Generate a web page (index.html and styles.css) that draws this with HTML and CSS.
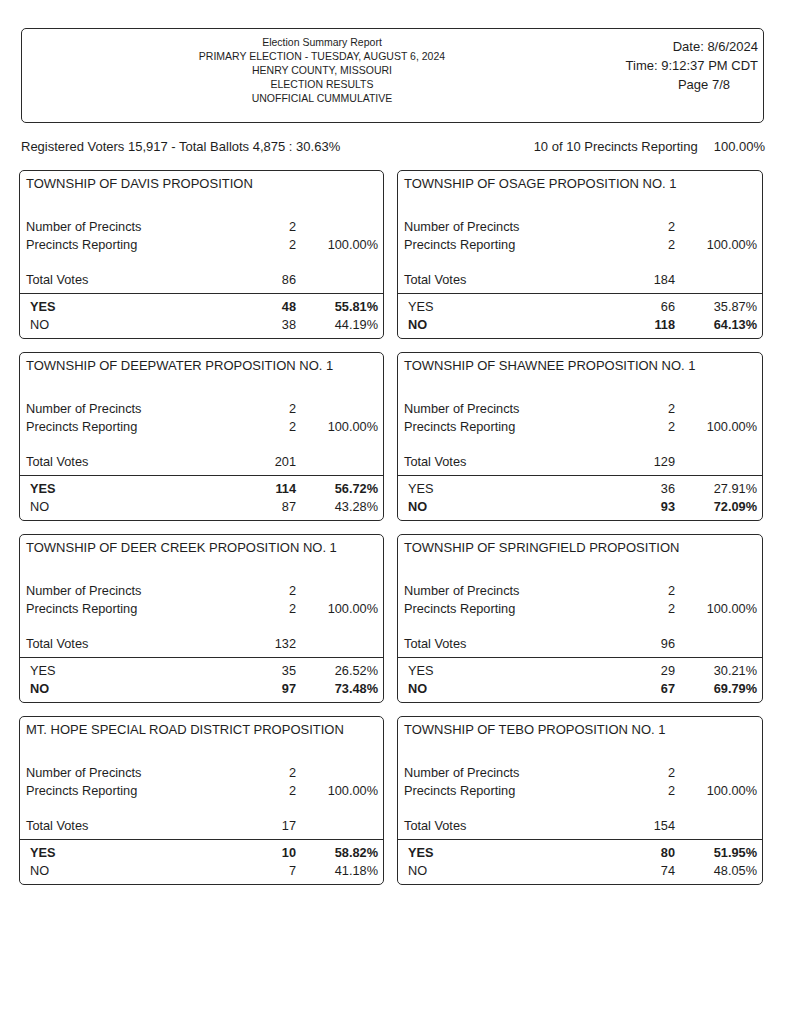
FILE: index.html
```html
<!DOCTYPE html>
<html>
<head>
<meta charset="utf-8">
<link rel="stylesheet" href="styles.css">
</head>
<body>
<div class="page">
  <header class="report-head">
    <div class="head-center">
      <div>Election Summary Report</div>
      <div>PRIMARY ELECTION - TUESDAY, AUGUST 6, 2024</div>
      <div>HENRY COUNTY, MISSOURI</div>
      <div>ELECTION RESULTS</div>
      <div>UNOFFICIAL CUMMULATIVE</div>
    </div>
    <div class="head-right">
      <div>Date: 8/6/2024</div>
      <div>Time: 9:12:37 PM CDT</div>
      <div class="page-no">Page 7/8</div>
    </div>
  </header>

  <div class="summary">
    <span>Registered Voters 15,917 - Total Ballots 4,875 : 30.63%</span>
    <span class="summary-right"><span>10 of 10 Precincts Reporting</span><span class="summary-pct">100.00%</span></span>
  </div>

  <main class="grid">
    <section class="box">
      <div class="title">TOWNSHIP OF DAVIS PROPOSITION</div>
      <div class="stats">
        <span>Number of Precincts</span><span class="num">2</span><span></span>
        <span>Precincts Reporting</span><span class="num">2</span><span class="num">100.00%</span>
      </div>
      <div class="stats total"><span>Total Votes</span><span class="num">86</span><span></span></div>
      <div class="stats choices">
        <span class="c b">YES</span><span class="num b">48</span><span class="num b">55.81%</span>
        <span class="c">NO</span><span class="num">38</span><span class="num">44.19%</span>
      </div>
    </section>

    <section class="box">
      <div class="title">TOWNSHIP OF OSAGE PROPOSITION NO. 1</div>
      <div class="stats">
        <span>Number of Precincts</span><span class="num">2</span><span></span>
        <span>Precincts Reporting</span><span class="num">2</span><span class="num">100.00%</span>
      </div>
      <div class="stats total"><span>Total Votes</span><span class="num">184</span><span></span></div>
      <div class="stats choices">
        <span class="c">YES</span><span class="num">66</span><span class="num">35.87%</span>
        <span class="c b">NO</span><span class="num b">118</span><span class="num b">64.13%</span>
      </div>
    </section>

    <section class="box">
      <div class="title">TOWNSHIP OF DEEPWATER PROPOSITION NO. 1</div>
      <div class="stats">
        <span>Number of Precincts</span><span class="num">2</span><span></span>
        <span>Precincts Reporting</span><span class="num">2</span><span class="num">100.00%</span>
      </div>
      <div class="stats total"><span>Total Votes</span><span class="num">201</span><span></span></div>
      <div class="stats choices">
        <span class="c b">YES</span><span class="num b">114</span><span class="num b">56.72%</span>
        <span class="c">NO</span><span class="num">87</span><span class="num">43.28%</span>
      </div>
    </section>

    <section class="box">
      <div class="title">TOWNSHIP OF SHAWNEE PROPOSITION NO. 1</div>
      <div class="stats">
        <span>Number of Precincts</span><span class="num">2</span><span></span>
        <span>Precincts Reporting</span><span class="num">2</span><span class="num">100.00%</span>
      </div>
      <div class="stats total"><span>Total Votes</span><span class="num">129</span><span></span></div>
      <div class="stats choices">
        <span class="c">YES</span><span class="num">36</span><span class="num">27.91%</span>
        <span class="c b">NO</span><span class="num b">93</span><span class="num b">72.09%</span>
      </div>
    </section>

    <section class="box">
      <div class="title">TOWNSHIP OF DEER CREEK PROPOSITION NO. 1</div>
      <div class="stats">
        <span>Number of Precincts</span><span class="num">2</span><span></span>
        <span>Precincts Reporting</span><span class="num">2</span><span class="num">100.00%</span>
      </div>
      <div class="stats total"><span>Total Votes</span><span class="num">132</span><span></span></div>
      <div class="stats choices">
        <span class="c">YES</span><span class="num">35</span><span class="num">26.52%</span>
        <span class="c b">NO</span><span class="num b">97</span><span class="num b">73.48%</span>
      </div>
    </section>

    <section class="box">
      <div class="title">TOWNSHIP OF SPRINGFIELD PROPOSITION</div>
      <div class="stats">
        <span>Number of Precincts</span><span class="num">2</span><span></span>
        <span>Precincts Reporting</span><span class="num">2</span><span class="num">100.00%</span>
      </div>
      <div class="stats total"><span>Total Votes</span><span class="num">96</span><span></span></div>
      <div class="stats choices">
        <span class="c">YES</span><span class="num">29</span><span class="num">30.21%</span>
        <span class="c b">NO</span><span class="num b">67</span><span class="num b">69.79%</span>
      </div>
    </section>

    <section class="box">
      <div class="title">MT. HOPE SPECIAL ROAD DISTRICT PROPOSITION</div>
      <div class="stats">
        <span>Number of Precincts</span><span class="num">2</span><span></span>
        <span>Precincts Reporting</span><span class="num">2</span><span class="num">100.00%</span>
      </div>
      <div class="stats total"><span>Total Votes</span><span class="num">17</span><span></span></div>
      <div class="stats choices">
        <span class="c b">YES</span><span class="num b">10</span><span class="num b">58.82%</span>
        <span class="c">NO</span><span class="num">7</span><span class="num">41.18%</span>
      </div>
    </section>

    <section class="box">
      <div class="title">TOWNSHIP OF TEBO PROPOSITION NO. 1</div>
      <div class="stats">
        <span>Number of Precincts</span><span class="num">2</span><span></span>
        <span>Precincts Reporting</span><span class="num">2</span><span class="num">100.00%</span>
      </div>
      <div class="stats total"><span>Total Votes</span><span class="num">154</span><span></span></div>
      <div class="stats choices">
        <span class="c b">YES</span><span class="num b">80</span><span class="num b">51.95%</span>
        <span class="c">NO</span><span class="num">74</span><span class="num">48.05%</span>
      </div>
    </section>
  </main>
</div>
</body>
</html>
```

FILE: styles.css
```css
html, body {
  margin: 0;
  padding: 0;
  background: #ffffff;
}

body {
  font-family: "Liberation Sans", Arial, sans-serif;
  color: #1e1e1e;
  width: 791px;
  height: 1024px;
  overflow: hidden;
}

.page {
  padding: 28px 27px 0 19px;
}

.report-head {
  margin-left: 2px;
  height: 95px;
  box-sizing: border-box;
  border: 1.5px solid #2a2a2a;
  border-radius: 5px;
  display: grid;
  grid-template-columns: 140px 320px 1fr;
  padding-top: 6px;
}

.head-center {
  grid-column: 2;
  text-align: center;
  font-size: 10.5px;
  line-height: 14px;
}

.head-right {
  grid-column: 3;
  text-align: right;
  font-size: 13px;
  line-height: 19px;
  padding-top: 2px;
  padding-right: 5px;
}

.page-no {
  padding-right: 28px;
}

.summary {
  margin-top: 16px;
  display: flex;
  justify-content: space-between;
  font-size: 13px;
  line-height: 16px;
  padding-left: 2px;
  margin-right: -1px;
}

.summary-right {
  display: flex;
  gap: 16px;
}

.grid {
  margin-top: 15px;
  display: grid;
  grid-template-columns: 365px 366px;
  column-gap: 13px;
  row-gap: 13px;
}

.box {
  height: 169px;
  box-sizing: border-box;
  border: 1.5px solid #2a2a2a;
  border-radius: 5px;
  font-size: 12.75px;
}

.title {
  font-size: 13px;
  line-height: 18px;
  padding: 4px 0 0 6px;
  white-space: nowrap;
}

.stats {
  display: grid;
  grid-template-columns: 1fr 60px 82px;
  line-height: 18px;
  padding: 0 5px 0 6px;
}

.title + .stats {
  margin-top: 25px;
}

.total {
  margin-top: 17px;
  padding-bottom: 4px;
  border-bottom: 1px solid #2a2a2a;
}

.choices {
  padding-top: 4px;
}

.num {
  text-align: right;
}

.c {
  padding-left: 4px;
}

.b {
  font-weight: bold;
}
```
